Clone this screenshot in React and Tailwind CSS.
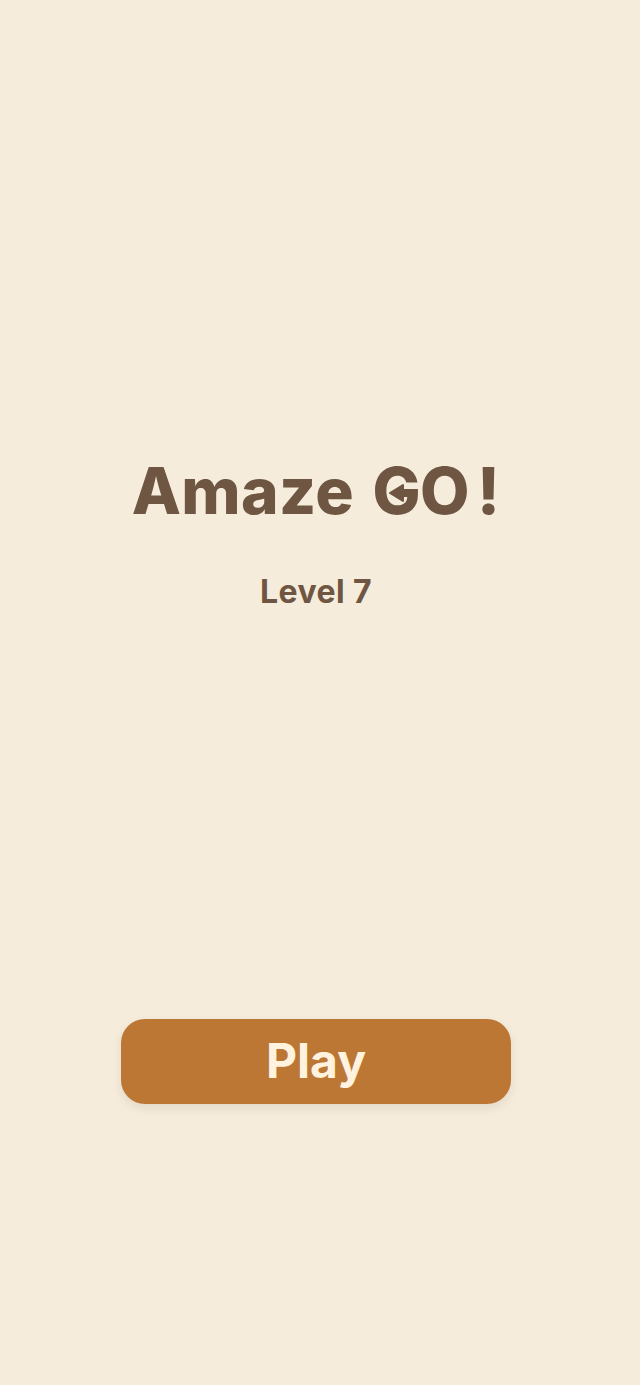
export default function App() {
  return (
    <div className="flex h-[1385px] w-[640px] flex-col items-center bg-[#f5ecdb] pr-2 font-['Inter',sans-serif]">
      <h1 className="mt-[452px] flex h-[78px] items-center text-[64px] font-extrabold leading-[78px] tracking-[0.4px] text-[#6f5642]">
        <span className="whitespace-pre">Amaze </span>
        <span className="relative ml-[4px]">
          G
          <svg className="absolute left-[12px] top-[28px]" width="24" height="26" viewBox="0 0 24 26" aria-hidden="true">
            <path d="M5 13 18 5v16z" fill="#6f5642" stroke="#6f5642" strokeWidth="2" strokeLinejoin="round" />
          </svg>
        </span>
        <span className="-ml-[1px]">O</span>
        <span className="ml-[7px]">!</span>
      </h1>
      <p className="mt-[41px] text-[32px] font-bold leading-[42px] tracking-[0.4px] text-[#6f5642]">Level 7</p>
      <button className="mt-[406px] h-[85px] w-[390px] rounded-[24px] bg-[#bd7735] pb-[2px] text-[48px] font-bold leading-none text-[#fff3e0] shadow-[0_4px_10px_rgba(111,84,64,0.12)]">
        Play
      </button>
    </div>
  );
}
